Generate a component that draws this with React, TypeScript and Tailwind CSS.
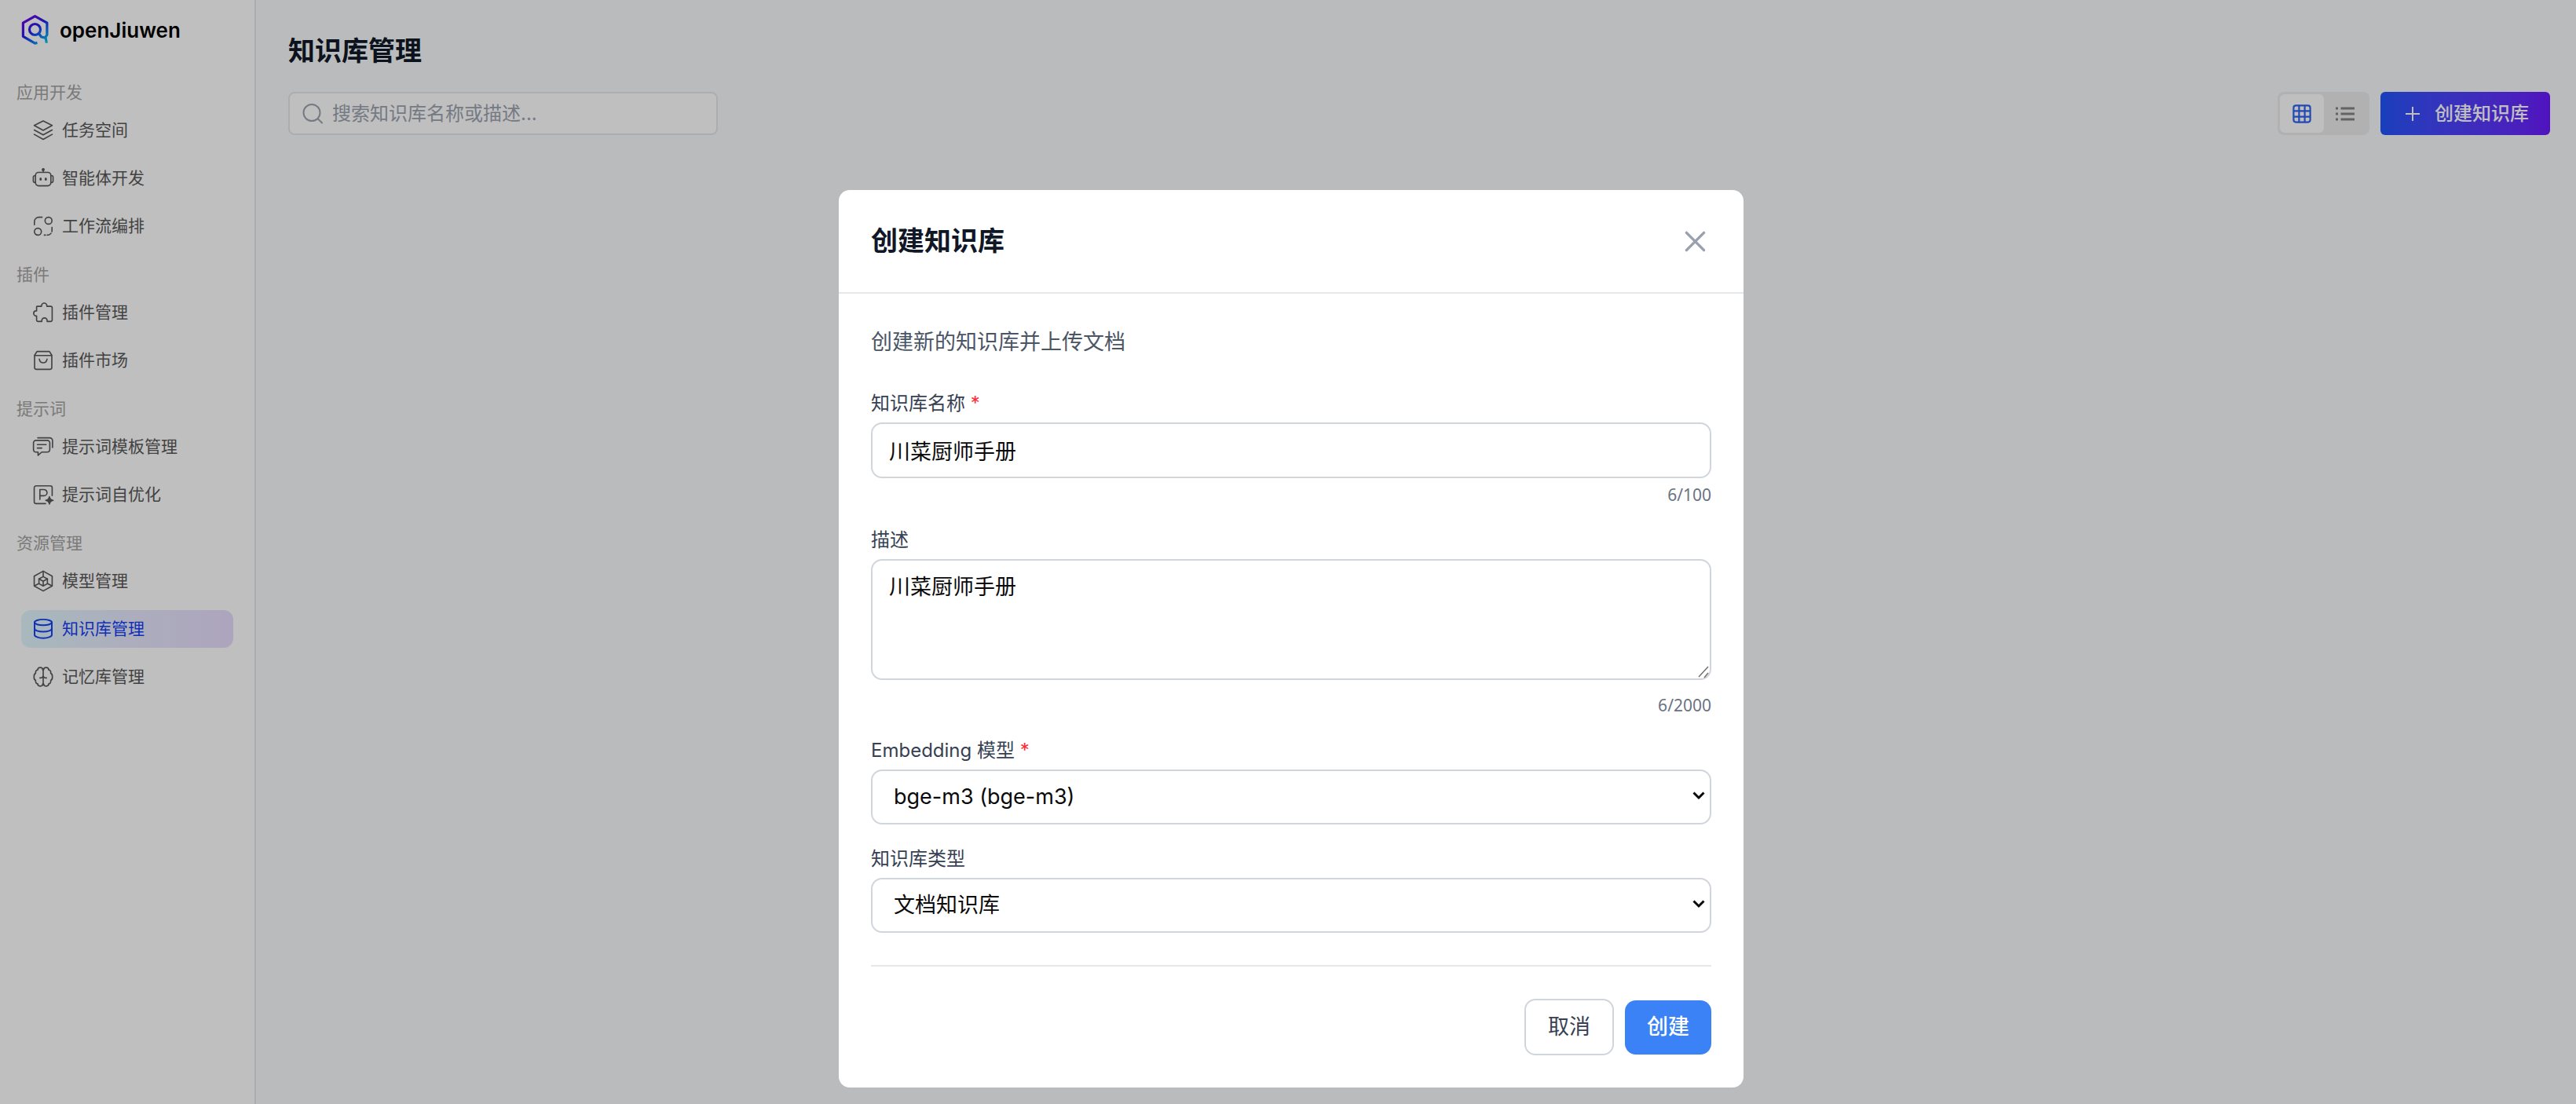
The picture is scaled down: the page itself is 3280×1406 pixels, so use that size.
import { useState } from 'react';
import type { ReactNode } from 'react';

interface NavItem {
  label: string;
  icon: ReactNode;
  active?: boolean;
}

interface NavGroup {
  title: string;
  items: NavItem[];
}

function Icon({ children }: { children: ReactNode }) {
  return (
    <svg
      viewBox="0 0 24 24"
      className="size-7 shrink-0"
      fill="none"
      stroke="currentColor"
      strokeWidth="1.4"
      strokeLinecap="round"
      strokeLinejoin="round"
      aria-hidden="true"
    >
      {children}
    </svg>
  );
}

const groups: NavGroup[] = [
  {
    title: '应用开发',
    items: [
      {
        label: '任务空间',
        icon: (
          <Icon>
            <path d="M12 1.8 21.8 6.6 12 12 2.2 6.6Z" />
            <path d="M2.2 11.6 12 17l9.8-5.4" />
            <path d="M2.2 16.4 12 21.8l9.8-5.4" />
          </Icon>
        ),
      },
      {
        label: '智能体开发',
        icon: (
          <Icon>
            <rect x="3.6" y="5.6" width="16.8" height="14.6" rx="3.4" />
            <path d="M3.4 9.2H2.6a1.4 1.4 0 0 0-1.4 1.4v4.6a1.4 1.4 0 0 0 1.4 1.4h.8M20.6 9.2h.8a1.4 1.4 0 0 1 1.4 1.4v4.6a1.4 1.4 0 0 1-1.4 1.4h-.8" />
            <path d="M12 5.2V3.4" />
            <circle cx="12" cy="2.6" r="1" fill="currentColor" />
            <path d="M9.2 12.6v.8M14.8 12.6v.8" strokeWidth="2.4" />
          </Icon>
        ),
      },
      {
        label: '工作流编排',
        icon: (
          <Icon>
            <circle cx="17.8" cy="6" r="3.8" />
            <circle cx="6.2" cy="18" r="3.8" />
            <path d="M2.4 10.6V7.2a5 5 0 0 1 5-5h3.4" />
            <path d="M21.6 13.4v3.4a5 5 0 0 1-5 5h-3.4" strokeDasharray="4.6 2" />
          </Icon>
        ),
      },
    ],
  },
  {
    title: '插件',
    items: [
      {
        label: '插件管理',
        icon: (
          <Icon>
            <path d="M5.4 5.2h4.8V4.6a2.9 2.9 0 0 1 5.8 0v.6h4.2a1.6 1.6 0 0 1 1.6 1.6v13.4a1.6 1.6 0 0 1-1.6 1.6h-3.9v-1a2.9 2.9 0 0 0-5.8 0v1H6.4a1.6 1.6 0 0 1-1.6-1.6v-4.4h-.4a2.8 2.8 0 0 1 0-5.6h.4V5.8a.6.6 0 0 1 .6-.6Z" />
          </Icon>
        ),
      },
      {
        label: '插件市场',
        icon: (
          <Icon>
            <path d="M2.6 6.4 5.2 2.2h13.6l2.6 4.2v13.4a2 2 0 0 1-2 2H4.6a2 2 0 0 1-2-2Z" />
            <path d="M2.8 6.6h18.4" />
            <path d="M7.8 10.6c.4 2.6 2 4 4.2 4s3.8-1.4 4.2-4" />
          </Icon>
        ),
      },
    ],
  },
  {
    title: '提示词',
    items: [
      {
        label: '提示词模板管理',
        icon: (
          <Icon>
            <path d="M4 5h12.6a2.6 2.6 0 0 1 2.6 2.6v7.6a2.6 2.6 0 0 1-2.6 2.6H10.4L6.4 21.4V17.8H4a2.6 2.6 0 0 1-2.6-2.6V7.6A2.6 2.6 0 0 1 4 5Z" />
            <path d="M6 2.2h13a3.2 3.2 0 0 1 3.2 3.2v7.4" />
            <path d="M5.6 9.6h9.6M5.6 13.4h4.8" />
          </Icon>
        ),
      },
      {
        label: '提示词自优化',
        icon: (
          <Icon>
            <path d="M21.8 13V4.4a2 2 0 0 0-2-2H4.2a2 2 0 0 0-2 2v15.4a2 2 0 0 0 2 2h10.4" />
            <path d="M8.4 17.2V6.4h4.4a3.4 3.4 0 0 1 0 6.8H8.4" />
            <path d="M18.8 14.2c.5 2.6 1.4 3.5 4 4-2.6.5-3.5 1.4-4 4-.5-2.6-1.4-3.5-4-4 2.6-.5 3.5-1.4 4-4Z" fill="currentColor" />
          </Icon>
        ),
      },
    ],
  },
  {
    title: '资源管理',
    items: [
      {
        label: '模型管理',
        icon: (
          <Icon>
            <path d="M12 1.2 21.8 6.6v10.8L12 22.8 2.2 17.4V6.6Z" />
            <path d="m12 7.2 4.6 2.5v5.2L12 17.4l-4.6-2.5V9.7Z" />
            <path d="M7.4 9.7 12 12.2l4.6-2.5M12 12.2v5.2M12 1.4v5.6M2.6 17.2l4.6-2.4M21.4 17.2l-4.6-2.4" />
          </Icon>
        ),
      },
      {
        label: '知识库管理',
        active: true,
        icon: (
          <Icon>
            <g strokeWidth="1.7">
              <ellipse cx="12" cy="4.8" rx="9.4" ry="3.2" />
              <path d="M2.6 4.8v13.6c0 1.9 4.2 3.6 9.4 3.6s9.4-1.7 9.4-3.6V4.8" />
              <path d="M2.6 11.6c0 1.9 4.2 3.4 9.4 3.4s9.4-1.5 9.4-3.4" />
            </g>
          </Icon>
        ),
      },
      {
        label: '记忆库管理',
        icon: (
          <Icon>
            <path d="M11.6 4.4c0-1.6-1.2-2.6-2.8-2.6S6 2.900 6 4.400c-1.700.3-2.600 1.700-2.200 3.500C2.400 8.800 1.800 10.400 2 12c-.2 1.600.4 3.200 1.800 4.100-.4 1.800.5 3.200 2.200 3.500 0 1.500 1.200 2.600 2.800 2.600s2.800-1 2.800-2.600" />
            <path d="M12.400 4.400c0-1.600 1.200-2.600 2.800-2.600S18 2.900 18 4.400c1.700.3 2.600 1.700 2.200 3.500 1.400.9 2 2.500 1.800 4.100.2 1.600-.4 3.200-1.800 4.100.4 1.800-.5 3.200-2.200 3.500 0 1.500-1.200 2.600-2.800 2.600s-2.800-1-2.800-2.600" />
            <path d="M12 4.400v15.200M8.400 13.200c2.200 0 3.600-1 3.600-2.800 0 1.800 1.400 2.800 3.600 2.800" />
          </Icon>
        ),
      },
    ],
  },
];

function Logo() {
  return (
    <svg viewBox="0 0 36 42" className="h-[42px] w-9" fill="none" aria-hidden="true">
      <defs>
        <linearGradient id="logo-stroke" x1="4" y1="4" x2="32" y2="38" gradientUnits="userSpaceOnUse">
          <stop offset="0" stopColor="#7a00e6" />
          <stop offset="0.45" stopColor="#1f22f0" />
          <stop offset="1" stopColor="#00d2f0" />
        </linearGradient>
      </defs>
      <g stroke="url(#logo-stroke)" strokeWidth="3.2" strokeLinejoin="round">
        <path d="M20.5 36.4 17.5 37.2 2.4 28.4V11.2L17.5 2.6l15.4 8.6V26.6L30 30.4" />
        <circle cx="17.5" cy="19.5" r="7" />
        <path d="m22.4 24.6 3.2 4.4 5.6 1.4 1.2 6.4" />
      </g>
    </svg>
  );
}

function Sidebar() {
  return (
    <aside className="w-[326px] shrink-0 border-r-2 border-[#e5e7eb] bg-white">
      <div className="flex items-center gap-[13px] px-[27px] pt-[18px]">
        <Logo />
        <span className="text-[26px] leading-[42px] font-semibold text-black">openJiuwen</span>
      </div>
      <nav className="pt-5">
        {groups.map((group) => (
          <section key={group.title} className="pt-[21px]">
            <h2 className="px-[21px] text-[21px] leading-[34px] text-[#a3a3a3]">{group.title}</h2>
            <ul className="mx-[27px] mt-[7px] flex flex-col gap-[13px]">
              {group.items.map((item) => (
                <li key={item.label}>
                  <a
                    href="#"
                    aria-current={item.active ? 'page' : undefined}
                    className={
                      item.active
                        ? 'flex h-12 items-center gap-[10px] rounded-xl bg-gradient-to-r from-[#e0f7fc] via-[#e6e8fd] to-[#e7dcfc] px-[14px] text-[21px] text-[#1440f5]'
                        : 'flex h-12 items-center gap-[10px] rounded-xl px-[14px] text-[21px] text-[#595959]'
                    }
                  >
                    {item.icon}
                    {item.label}
                  </a>
                </li>
              ))}
            </ul>
          </section>
        ))}
      </nav>
    </aside>
  );
}

function Toolbar() {
  return (
    <div className="mt-7 flex items-center justify-between">
      <label className="flex h-[55px] w-[547px] items-center gap-3 rounded-lg border-2 border-[#e5e7eb] bg-white px-4">
        <svg viewBox="0 0 26 28" className="h-7 w-[26px] shrink-0 text-[#9ca3af]" fill="none" stroke="currentColor" strokeWidth="2" strokeLinecap="round" aria-hidden="true">
          <circle cx="12" cy="12.5" r="10.5" />
          <path d="m20 20.5 5 5" />
        </svg>
        <input
          type="search"
          aria-label="搜索知识库"
          placeholder="搜索知识库名称或描述..."
          className="min-w-0 flex-1 bg-transparent text-[24px] leading-[34px] outline-none placeholder:text-[#9ca3af]"
        />
      </label>

      <div className="flex items-center gap-[14px]">
        <div className="flex h-[55px] w-[117px] rounded-lg bg-[#ececee] p-[3px]">
          <button type="button" aria-label="网格视图" className="flex flex-1 items-center justify-center rounded-md bg-white text-[#2f62f0]">
            <svg viewBox="0 0 24 24" className="size-6" fill="none" stroke="currentColor" strokeWidth="2.2" aria-hidden="true">
              <rect x="1.4" y="1.4" width="21.2" height="21.2" rx="3" />
              <path d="M8.4 1.4v21.2M15.6 1.4v21.2M1.4 8.4h21.2M1.4 15.6h21.2" />
            </svg>
          </button>
          <button type="button" aria-label="列表视图" className="flex flex-1 items-center justify-center text-[#858585]">
            <svg viewBox="0 0 24 24" className="size-6" fill="none" stroke="currentColor" strokeWidth="3" aria-hidden="true">
              <path d="M0 5h3M6.5 5H24M0 12h3M6.5 12H24M0 19h3M6.5 19H24" />
            </svg>
          </button>
        </div>
        <button
          type="button"
          className="flex h-[55px] items-center gap-[19px] rounded-md bg-gradient-to-r from-[#1f54fb] to-[#6b18fe] pr-[27px] pl-8 text-[24px] font-medium text-white"
        >
          <svg viewBox="0 0 18 18" className="size-[18px]" stroke="currentColor" strokeWidth="2" aria-hidden="true">
            <path d="M9 0v18M0 9h18" />
          </svg>
          创建知识库
        </button>
      </div>
    </div>
  );
}

function SelectField({ id, label, required, options }: { id: string; label: string; required?: boolean; options: string[] }) {
  return (
    <div>
      <label htmlFor={id} className="block text-[24px] leading-[34px] text-[#364153]">
        {label}
        {required && <span className="text-[#fb2c36]"> *</span>}
      </label>
      <div className="relative mt-[7px]">
        <select
          id={id}
          className="block h-[70px] w-full appearance-none rounded-[14px] border-2 border-[#d1d5dc] bg-white px-[27px] text-[27px] text-[#0a0a0a] outline-none"
        >
          {options.map((option) => (
            <option key={option}>{option}</option>
          ))}
        </select>
        <svg viewBox="0 0 16 11" className="pointer-events-none absolute top-7 right-2 h-[11px] w-4" fill="none" stroke="#0a0a0a" strokeWidth="3" aria-hidden="true">
          <path d="m1.5 1.5 6.5 6.5 6.5-6.5" />
        </svg>
      </div>
    </div>
  );
}

function CreateDialog() {
  const [name, setName] = useState('川菜厨师手册');
  const [description, setDescription] = useState('川菜厨师手册');

  return (
    <div className="fixed inset-0 flex items-start justify-center overflow-hidden bg-black/25 pt-[242px] pl-2">
      <div role="dialog" aria-modal="true" aria-labelledby="dialog-title" className="w-full max-w-[1152px] rounded-[14px] bg-white">
        <header className="flex items-center justify-between border-b-2 border-[#e5e7eb] p-[41px]">
          <h2 id="dialog-title" className="text-[34px] leading-[48px] font-semibold text-[#101828]">
            创建知识库
          </h2>
          <button type="button" aria-label="关闭" className="text-[#99a1af]">
            <svg viewBox="0 0 24 24" className="size-[41px]" fill="none" stroke="currentColor" strokeWidth="2" strokeLinecap="round" aria-hidden="true">
              <path d="M5.5 5.5l13 13M18.5 5.5l-13 13" />
            </svg>
          </button>
        </header>

        <form className="p-[41px]">
          <p className="text-[27px] leading-[41px] text-[#4a5565]">创建新的知识库并上传文档</p>

          <div className="mt-[41px] flex flex-col gap-[27px]">
            <div>
              <label htmlFor="kb-name" className="block text-[24px] leading-[34px] text-[#364153]">
                知识库名称<span className="text-[#fb2c36]"> *</span>
              </label>
              <input
                id="kb-name"
                type="text"
                maxLength={100}
                value={name}
                onChange={(e) => setName(e.target.value)}
                className="mt-[7px] block h-[71px] w-full rounded-[14px] border-2 border-[#d1d5dc] px-[21px] text-[27px] text-[#0a0a0a] outline-none"
              />
              <div className="mt-[7px] text-right font-['Noto_Sans'] text-[21px] leading-[28px] text-[#6a7282]">{name.length}/100</div>
            </div>

            <div>
              <label htmlFor="kb-description" className="block text-[24px] leading-[34px] text-[#364153]">
                描述
              </label>
              <div className="relative mt-[7px]">
                <textarea
                  id="kb-description"
                  maxLength={2000}
                  value={description}
                  onChange={(e) => setDescription(e.target.value)}
                  className="block h-[154px] w-full resize-none rounded-[14px] border-2 border-[#d1d5dc] px-[21px] py-[13px] text-[27px] leading-[41px] text-[#0a0a0a] outline-none"
                />
                <svg viewBox="0 0 14 16" className="pointer-events-none absolute right-[3px] bottom-[2px] h-4 w-[14px]" stroke="#737373" strokeWidth="1.5" aria-hidden="true">
                  <path d="M1 14 13 1M8 15l5-6" />
                </svg>
              </div>
              <div className="mt-[18px] text-right font-['Noto_Sans'] text-[21px] leading-[28px] text-[#6a7282]">{description.length}/2000</div>
            </div>

            <SelectField id="kb-embedding" label="Embedding 模型" required options={['bge-m3 (bge-m3)']} />
            <SelectField id="kb-type" label="知识库类型" options={['文档知识库']} />
          </div>

          <footer className="mt-[41px] flex items-center justify-end gap-[14px] border-t-2 border-[#e5e7eb] pt-[41px]">
            <button type="button" className="h-[72px] rounded-[14px] border-2 border-[#d1d5dc] px-7 text-[27px] text-[#364153]">
              取消
            </button>
            <button type="submit" className="h-[69px] rounded-[14px] bg-[#3b82f6] px-7 text-[27px] font-medium text-white">
              创建
            </button>
          </footer>
        </form>
      </div>
    </div>
  );
}

export default function App() {
  return (
    <div className="flex min-h-screen bg-gray-50 font-['Inter','Noto_Sans_CJK_SC',sans-serif]">
      <Sidebar />
      <main className="min-w-0 flex-1 pt-[41px] pr-[33px] pl-[41px]">
        <h1 className="text-[34px] leading-[48px] font-semibold text-[#101828]">知识库管理</h1>
        <Toolbar />
      </main>
      <CreateDialog />
    </div>
  );
}
